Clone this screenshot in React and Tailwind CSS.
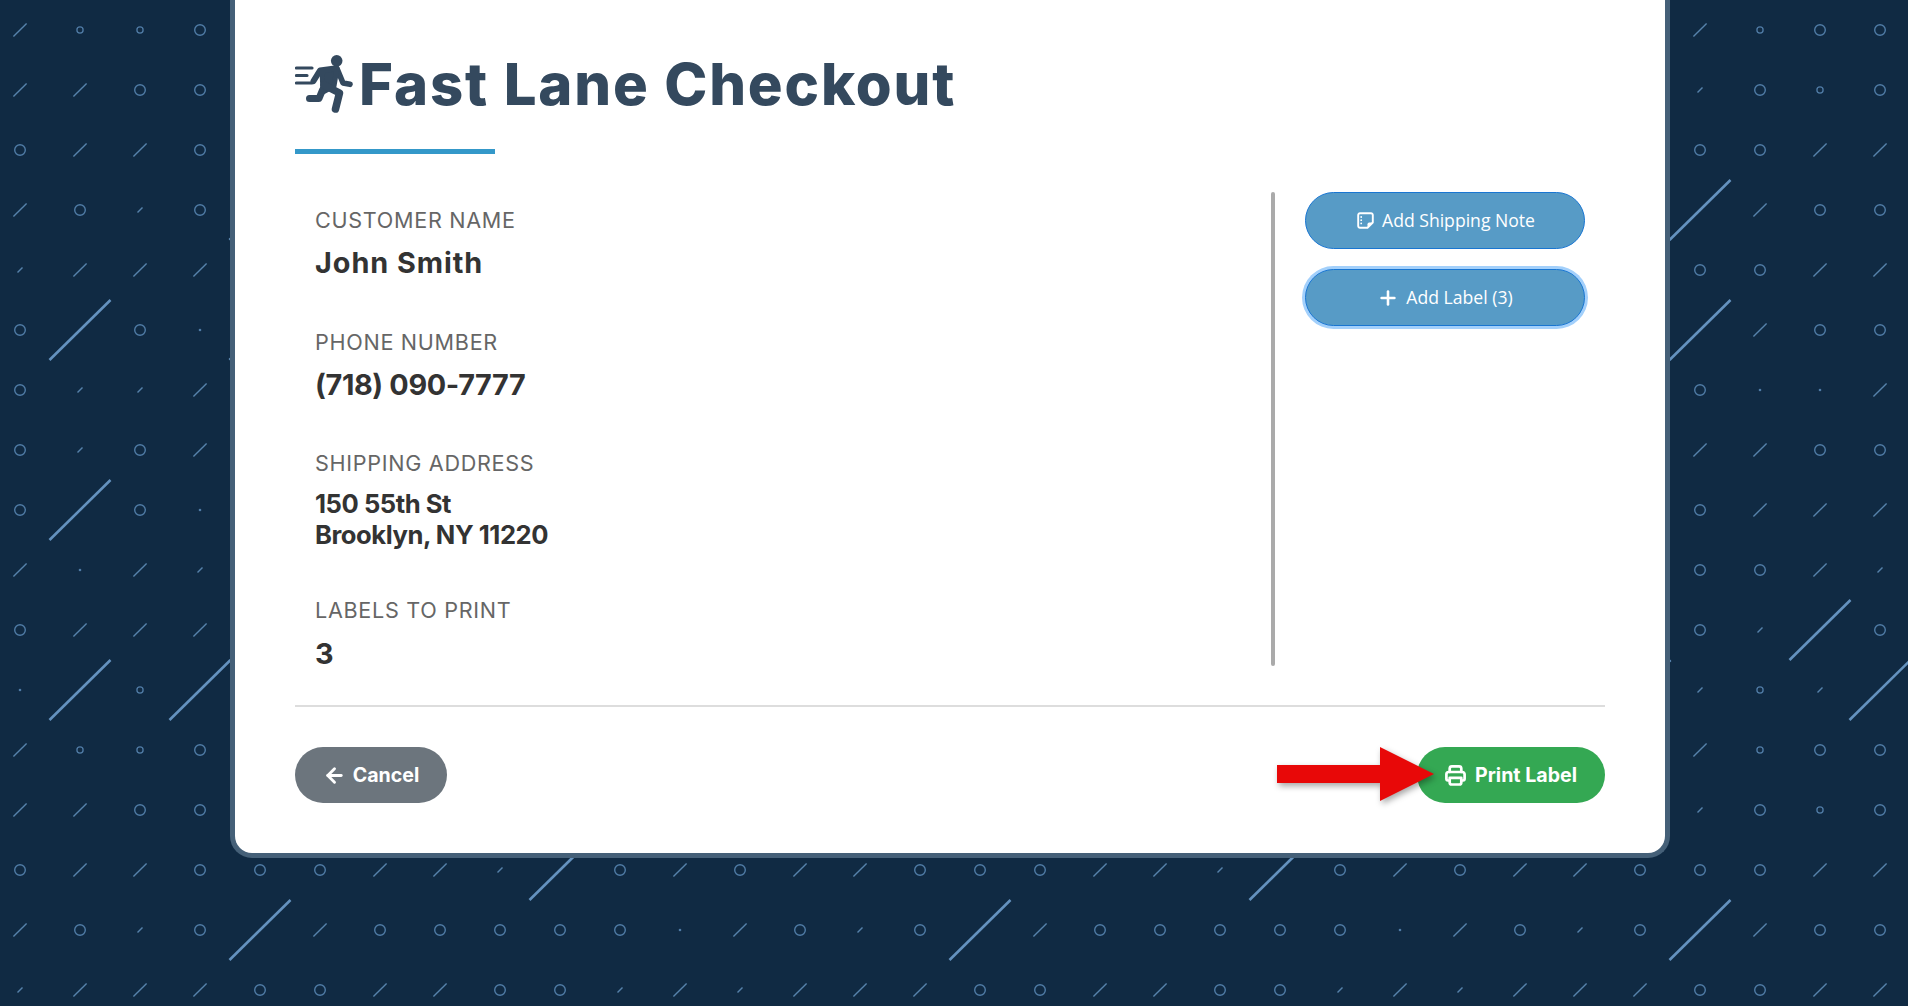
import React from "react";
import { ArrowLeft, Plus } from "lucide-react";

const gap = "........................";
const rows = [
  "lsso" + gap + "lsoo",
  "lloo" + gap + "toso",
  "ollo" + gap + "ooll",
  "loto" + "L......................." + "Lloo",
  "tlll" + gap + "ooll",
  "oLod" + "L......................." + "Lloo",
  "ottl" + gap + "oddl",
  "otol" + gap + "lloo",
  "oLod" + gap + "olll",
  "ldlt" + gap + "oolt",
  "olll" + gap + "otLo",
  "dLsL" + ".......................L" + "tstL",
  "lsso" + gap + "lsoo",
  "lloo" + gap + "toso",
  "olloooll" + "tLololloooll" + "tLololloooll",
  "lotoLlooooodlotoLlooooodlotoLloo",
  "tllloolloot" + "ltllloolloot" + "ltlllooll",
];

function Pattern() {
  const cells = [];
  rows.forEach((row, j) => {
    [...row].forEach((c, i) => {
      const x = 20 + 60 * i;
      const y = 30 + 60 * j;
      const key = `${i}-${j}`;
      if (c === "l") cells.push(<line key={key} x1={x - 6.6} y1={y + 6.6} x2={x + 6.6} y2={y - 6.6} stroke="#5682ab" strokeWidth="1.4" />);
      if (c === "t") cells.push(<line key={key} x1={x - 2.5} y1={y + 2.5} x2={x + 2.5} y2={y - 2.5} stroke="#5682ab" strokeWidth="1.4" />);
      if (c === "L") cells.push(<line key={key} x1={x - 30.5} y1={y + 30} x2={x + 30.5} y2={y - 30} stroke="#6492bf" strokeWidth="2.6" />);
      if (c === "o") cells.push(<circle key={key} cx={x} cy={y} r="5.3" fill="none" stroke="#507ca6" strokeWidth="1.4" />);
      if (c === "s") cells.push(<circle key={key} cx={x} cy={y} r="3.1" fill="none" stroke="#507ca6" strokeWidth="1.3" />);
      if (c === "d") cells.push(<circle key={key} cx={x} cy={y} r="1.3" fill="#507ca6" />);
    });
  });
  return (
    <svg className="absolute inset-0" width="1908" height="1006" viewBox="0 0 1908 1006">
      {cells}
    </svg>
  );
}

function RunnerIcon() {
  return (
    <svg width="58" height="58" viewBox="0 0 58 58" className="shrink-0" fill="none" stroke="#34495e" strokeLinecap="round" strokeLinejoin="round">
      <circle cx="41.7" cy="5.8" r="5.8" fill="#34495e" stroke="none" />
      <path d="M1.5 13H17M1.5 20.5H12M1.5 28H17" strokeWidth="3.2" />
      <path d="M18.5 26L25 15.5L40 13.5" strokeWidth="6" />
      <path d="M42 13.5L48 28L55 29.3" strokeWidth="5.6" />
      <path d="M27 16L42 13.5L39 31L28 37Z" fill="#34495e" strokeWidth="5" />
      <path d="M27.5 35L24 43.5H14.5" strokeWidth="7" />
      <path d="M29 30L44.5 38L40.5 54" strokeWidth="7.5" />
    </svg>
  );
}

function NoteIcon() {
  return (
    <svg width="17" height="17" viewBox="0 0 17 17" fill="none" className="shrink-0">
      <path d="M3 1.2H14A1.8 1.8 0 0 1 15.8 3V10.5L10.5 15.8H3A1.8 1.8 0 0 1 1.2 14V3A1.8 1.8 0 0 1 3 1.2Z" stroke="#fff" strokeWidth="1.9" strokeLinejoin="round" />
      <path d="M10.5 15.8V12.2A1.7 1.7 0 0 1 12.2 10.5H15.8Z" fill="#fff" />
      <circle cx="4.2" cy="5" r="0.9" fill="#fff" />
      <circle cx="4.2" cy="8.2" r="0.9" fill="#fff" />
      <circle cx="4.2" cy="11.4" r="0.9" fill="#fff" />
    </svg>
  );
}

function PrinterIcon() {
  return (
    <svg width="21" height="21" viewBox="0 0 21 21" fill="none" stroke="#fff" strokeWidth="2.7" strokeLinejoin="round" strokeLinecap="round" className="shrink-0">
      <path d="M4.7 7V3.5A2.2 2.2 0 0 1 6.9 1.4H14.1A2.2 2.2 0 0 1 16.3 3.5V7" />
      <path d="M4.5 15.5H3A1.7 1.7 0 0 1 1.4 13.8V9.3A2.3 2.3 0 0 1 3.7 7H17.3A2.3 2.3 0 0 1 19.6 9.3V13.8A1.7 1.7 0 0 1 18 15.5H16.5" />
      <path d="M4.7 12.8H16.3V17.5A2 2 0 0 1 14.3 19.5H6.7A2 2 0 0 1 4.7 17.5Z" />
    </svg>
  );
}

function Field({ label, children, valueClass, labelTop }) {
  return (
    <div className={labelTop}>
      <div className="font-['Inter',sans-serif] text-[21.6px] leading-[25px] tracking-[0.7px] text-[#666666]">{label}</div>
      <div className={`font-['Inter',sans-serif] font-bold text-[#333333] ${valueClass}`}>{children}</div>
    </div>
  );
}

export default function App() {
  return (
    <div className="relative w-[1908px] h-[1006px] overflow-hidden bg-[#102a43]">
      <Pattern />
      <div className="relative ml-[230px] w-[1440px] h-[858px] bg-white border-x-[5px] border-b-[5px] border-[#456078] rounded-b-[22px] px-[60px] pt-[55px]">
        <div className="flex items-start h-[58px]">
          <RunnerIcon />
          <h1 className="ml-[6px] font-['Inter',sans-serif] font-extrabold text-[58px] leading-[58px] tracking-[1.85px] text-[#34495e] whitespace-nowrap">Fast Lane Checkout</h1>
        </div>
        <div className="mt-[36px] w-[200px] h-[5px] bg-[#3498c9]" />
        <div className="mt-[38px] flex h-[474px]">
          <div className="w-[976px] pl-[20px] pt-[16px]">
            <Field label="CUSTOMER NAME" valueClass="mt-[12px] text-[28.8px] leading-[36px] tracking-[0.95px]">John Smith</Field>
            <Field label="PHONE NUMBER" labelTop="mt-[49px]" valueClass="mt-[12px] text-[28.8px] leading-[36px] tracking-[-0.35px]">(718) 090-7777</Field>
            <Field label="SHIPPING ADDRESS" labelTop="mt-[48px]" valueClass="mt-[12px] text-[25.6px] leading-[31px] tracking-[-0.45px]">
              <div>150 55th St</div>
              <div>Brooklyn, NY 11220</div>
            </Field>
            <Field label="LABELS TO PRINT" labelTop="mt-[48px]" valueClass="mt-[13px] text-[28.8px] leading-[36px]">3</Field>
          </div>
          <div className="w-[4px] h-full bg-[#aaaaaa] rounded-[2px]" />
          <div className="ml-[30px] w-[280px] flex flex-col gap-[20px] font-['Open_Sans',sans-serif] text-[17.6px] text-white">
            <button className="h-[57px] w-full rounded-full bg-[#579bc6] border border-[#1976d2] pl-[2px] flex items-center justify-center gap-[8px]">
              <NoteIcon />
              Add Shipping Note
            </button>
            <button className="h-[57px] w-full rounded-full bg-[#579bc6] border border-[#1976d2] ring-[3px] ring-[#a3d0fb] flex items-center justify-center gap-[7px]">
              <Plus size={22} strokeWidth={2.8} />
              Add Label (3)
            </button>
          </div>
        </div>
        <div className="mt-[39px] h-[2px] bg-[#dddddd]" />
        <div className="mt-[40px] flex justify-between font-['Inter',sans-serif] font-bold text-[19.6px] text-white">
          <button className="h-[56px] w-[152px] rounded-full bg-[#6c757d] flex items-center justify-center gap-[7px]">
            <ArrowLeft size={23} strokeWidth={3} />
            <span className="pt-[2px]">Cancel</span>
          </button>
          <button className="h-[56px] w-[188px] rounded-full bg-[#34a853] flex items-center justify-center gap-[9px]">
            <PrinterIcon />
            <span className="pt-[2px]">Print Label</span>
          </button>
        </div>
        <svg className="absolute left-[1042px] top-[747px] drop-shadow-[2px_3px_3px_rgba(0,0,0,0.35)]" width="160" height="58" viewBox="0 0 160 58">
          <polygon points="0,18 103,18 103,0 157,27 103,54 103,36 0,36" fill="#e80808" />
        </svg>
      </div>
    </div>
  );
}
